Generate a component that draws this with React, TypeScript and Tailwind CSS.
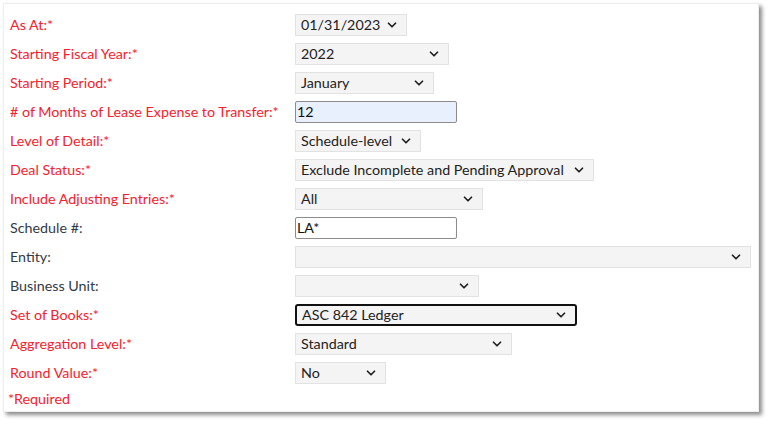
import { ChevronDown } from "lucide-react";

type Field = {
  label: string;
  required?: boolean;
  kind: "select" | "input";
  value: string;
  width: number;
  focused?: boolean;
  autofill?: boolean;
};

const fields: Field[] = [
  { label: "As At:", required: true, kind: "select", value: "01/31/2023", width: 112 },
  { label: "Starting Fiscal Year:", required: true, kind: "select", value: "2022", width: 154 },
  { label: "Starting Period:", required: true, kind: "select", value: "January", width: 139 },
  { label: "# of Months of Lease Expense to Transfer:", required: true, kind: "input", value: "12", width: 162, autofill: true },
  { label: "Level of Detail:", required: true, kind: "select", value: "Schedule-level", width: 126 },
  { label: "Deal Status:", required: true, kind: "select", value: "Exclude Incomplete and Pending Approval", width: 299 },
  { label: "Include Adjusting Entries:", required: true, kind: "select", value: "All", width: 188 },
  { label: "Schedule #:", kind: "input", value: "LA*", width: 162 },
  { label: "Entity:", kind: "select", value: "", width: 456 },
  { label: "Business Unit:", kind: "select", value: "", width: 184 },
  { label: "Set of Books:", required: true, kind: "select", value: "ASC 842 Ledger", width: 282, focused: true },
  { label: "Aggregation Level:", required: true, kind: "select", value: "Standard", width: 217 },
  { label: "Round Value:", required: true, kind: "select", value: "No", width: 91 },
];

const Control = ({ field }: { field: Field }) => {
  if (field.kind === "input") {
    return (
      <div
        className={`flex h-[22px] items-center rounded-[2px] border border-[#8c8c8c] pl-[1px] text-[#111] ${field.autofill ? "bg-[#e8f0fe]" : "bg-white"}`}
        style={{ width: field.width }}
      >
        {field.value}
      </div>
    );
  }
  return (
    <div
      className={`flex h-[22px] items-center justify-between gap-[4px] bg-[#f4f4f4] pl-[5px] pr-[7px] text-[#222] ${field.focused ? "rounded-[3px] border-2 border-[#111]" : "border border-[#e2e2e2]"}`}
      style={{ width: field.width }}
    >
      <span className="whitespace-nowrap">{field.value}</span>
      <ChevronDown size={14} strokeWidth={3} className="shrink-0 text-[#222]" />
    </div>
  );
};

export default function App() {
  return (
    <div className="h-[424px] w-[771px] bg-white font-['Lato','Liberation_Sans',sans-serif] text-[14.3px]">
      <div className="ml-[3px] mt-[3px] h-[409px] w-[756px] border border-[#eeeeee] bg-white pl-[6px] pt-[6px] shadow-[3px_3px_4px_rgba(0,0,0,0.45)]">
        {fields.map((f) => (
          <div key={f.label} className="flex h-[29px] items-center">
            <div className={`w-[285px] whitespace-nowrap ${f.required ? "text-[#f5222d]" : "text-[#333a45]"}`}>
              {f.label}
              {f.required && <span>*</span>}
            </div>
            <Control field={f} />
          </div>
        ))}
        <div className="-ml-[2px] mt-[1px] text-[#f5222d]">*Required</div>
      </div>
    </div>
  );
}
